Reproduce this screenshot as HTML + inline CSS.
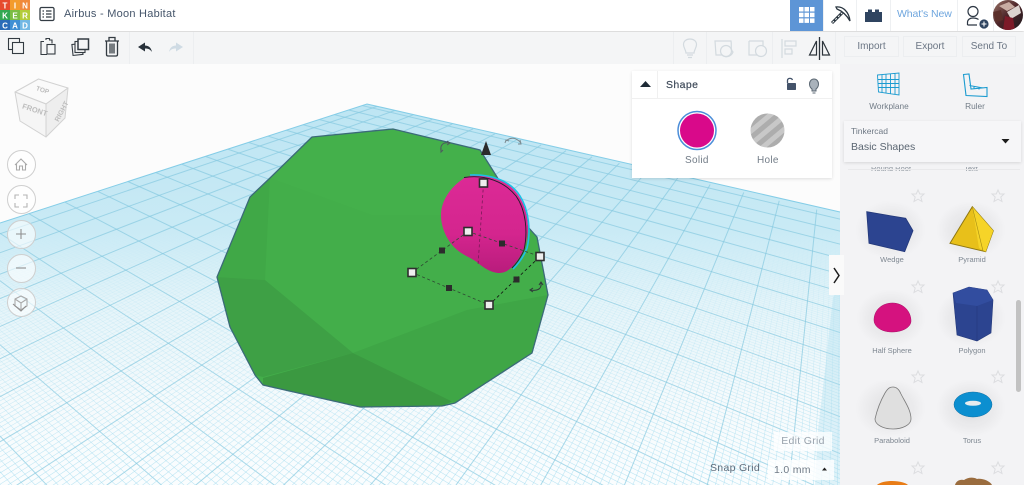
<!DOCTYPE html>
<html><head><meta charset="utf-8">
<style>
html,body{margin:0;padding:0;width:1024px;height:485px;overflow:hidden;background:#fcfcfc;font-family:"Liberation Sans",sans-serif}
.a{position:absolute}
#top{left:0;top:0;width:1024px;height:31px;background:#fff;box-shadow:0 1px 2px rgba(0,0,0,.18)}
#tb{left:0;top:32px;width:1024px;height:32px;background:#f4f5f6}
.t{position:absolute;white-space:nowrap;line-height:1}
.btn{position:absolute;top:36px;height:21px;border:1px solid #eceef0;box-sizing:border-box;text-align:center;font-size:10px;line-height:19px;color:#6b7684;background:#f4f5f6}
.lab{position:absolute;width:80px;text-align:center;font-size:7.5px;color:#7e8791;line-height:1}
.v{position:absolute;left:7px;width:27px;height:27px;border:1px solid #cfcfcf;border-radius:50%;background:rgba(255,255,255,.6)}
</style></head><body>
<svg id="plate" class="a" style="left:0;top:0;overflow:hidden" width="1024" height="485">
<defs>
<clipPath id="pc"><polygon points="0,223 367,104 840,212 840,485 0,485"/></clipPath>
<linearGradient id="bg" gradientUnits="userSpaceOnUse" x1="0" y1="104" x2="0" y2="485"><stop offset="0" stop-color="#bde5f3"/><stop offset=".33" stop-color="#c9eaf5"/><stop offset=".52" stop-color="#e4f4f9"/><stop offset=".78" stop-color="#f5fafc"/><stop offset="1" stop-color="#fafdfe"/></linearGradient>
<linearGradient id="mg" gradientUnits="userSpaceOnUse" x1="0" y1="230" x2="0" y2="470"><stop offset="0" stop-color="#a5dcef" stop-opacity="0"/><stop offset=".4" stop-color="#a5dcef" stop-opacity=".3"/><stop offset="1" stop-color="#a5dcef" stop-opacity=".7"/></linearGradient>
</defs>
<g id="grid" clip-path="url(#pc)"><rect width="1024" height="485" fill="url(#bg)"/></g>
<polygon points="840,290 833,297 825,370 818,430 815,485 840,485" fill="#a8dcee" opacity=".35"/>
<path d="M0 223L367 104L840 212" fill="none" stroke="#84cde7" stroke-width="1"/>
</svg>
<svg class="a" style="left:0;top:0" width="1024" height="485">
<polygon points="312,137 393,129 480,150 497,177 528,227 537,237 548,295 532,353 455,403 442,406 360,407 263,385 255,375 230,327 217,277 250,197 270,178" fill="#43ae4a"/>
<polygon points="217,277 250,197 270,178 265,280" fill="#40a847"/>
<polygon points="217,277 265,280 353,353 263,377 255,375 230,327" fill="#3ea045"/>
<polygon points="263,378 353,353 455,400 442,406 360,407 263,385" fill="#3b9941"/>
<polygon points="353,353 467,310 548,295 532,353 455,403" fill="#3fa646"/>
<polygon points="312,137 393,129 480,150 497,177 470,215 372,215 270,178" fill="#44b04b"/>
<polygon points="312,137 393,129 480,150 497,177 528,227 537,237 548,295 532,353 455,403 442,406 360,407 263,385 255,375 230,327 217,277 250,197 270,178" fill="none" stroke="#3b6a78" stroke-width="1.300"/>
<defs><linearGradient id="pk" x1="0" y1="0" x2="0" y2="1"><stop offset="0" stop-color="#dc2a96"/><stop offset=".6" stop-color="#d4258e"/><stop offset="1" stop-color="#b81c7c"/></linearGradient></defs>
<path d="M466 177C478 173 497 176 510 186C522 196 528 212 528 228C528 243 521 258 512 267C507 272 503 273 498 273C490 272 484 268 478 263C472 258 462 255 455 248C447 240 441 228 441 215C441 200 452 185 466 177Z" fill="url(#pk)"/>
<path d="M470 175C490 174 510 180 520 196C529 210 531 232 527 248C524 256 519 263 513 269" fill="none" stroke="#1cc0e6" stroke-width="1.600"/>
<path d="M464 177.500C485 174 505 182 516 196C526 210 528 232 524 250C521 257 517 263 512 268" fill="none" stroke="#1f1f2a" stroke-width=".9"/>
<g stroke="#2f4a33" stroke-width=".8" stroke-dasharray="3 2.500" fill="none">
<path d="M412 272.500L468 231.500M412 272.500L489 305M468 231.500L540 256.500"/>
<path d="M483.500 184L478 265" stroke="#7a1a58"/>
<path d="M489 305L540 256.500" stroke="#111"/>
</g>
<g fill="#2c2c2c"><rect x="499" y="240.500" width="6" height="6"/><rect x="439" y="247.500" width="6" height="6"/><rect x="446" y="285" width="6" height="6"/><rect x="513.500" y="276.500" width="6" height="6"/></g>
<g fill="#eee" stroke="#2e2e2e" stroke-width="1.600"><rect x="479.500" y="179" width="8" height="8"/><rect x="464" y="227.500" width="8" height="8"/><rect x="408" y="268.500" width="8" height="8"/><rect x="485" y="301" width="8" height="8"/><rect x="536" y="252.500" width="8" height="8"/></g>
<path d="M481 155L491 155L486 141Z" fill="#2b2b2b"/>
<g fill="none" stroke="#4d5a5f" stroke-width="1"><path d="M441 151C440 145 443 142 449 143"/><path d="M441 148L441 152L443 150M447 141L450 143L447 145"/></g>
<g fill="none" stroke="#7c8a90" stroke-width="1"><path d="M506 141C510 137 516 137 521 143"/><path d="M505 143L506 140L509 141M520 140L521 144L518 144"/></g>
<g fill="none" stroke="#2f3a3a" stroke-width="1"><path d="M530 290C536 291 542 290 541 283"/><path d="M533 288L530 290L533 292M539 285L541 282L543 285"/></g>
</svg>

<div id="top" class="a"></div>
<div id="tb" class="a"></div>
<svg class="a" style="left:0;top:0" width="30" height="30">
<rect width="10" height="10" fill="#e64a2e"/><rect x="10" width="10" height="10" fill="#f39c2d"/><rect x="20" width="10" height="10" fill="#f08a3c"/>
<rect y="10" width="10" height="10" fill="#33a852"/><rect x="10" y="10" width="10" height="10" fill="#7cbd42"/><rect x="20" y="10" width="10" height="10" fill="#b4cc3a"/>
<rect y="20" width="10" height="10" fill="#2a6cb8"/><rect x="10" y="20" width="10" height="10" fill="#3f90d4"/><rect x="20" y="20" width="10" height="10" fill="#72b8e4"/>
<g font-family="Liberation Sans" font-weight="700" font-size="8" fill="#fff" text-anchor="middle"><text x="5" y="8.500">T</text><text x="15" y="8.500">I</text><text x="25" y="8.500">N</text><text x="5" y="18.500">K</text><text x="15" y="18.500">E</text><text x="25" y="18.500">R</text><text x="5" y="28.500">C</text><text x="15" y="28.500">A</text><text x="25" y="28.500">D</text></g>
</svg>
<svg class="a" style="left:39px;top:6px" width="16" height="16" fill="none" stroke="#333c44" stroke-width="1.300"><rect x="1" y="1.500" width="14" height="13" rx="1.500"/><path d="M3.500 5H5M7 5H12.500M3.500 8H5M7 8H12.500M3.500 11H5M7 11H12.500"/></svg>
<div class="t" style="left:64px;top:9px;font-size:11px;color:#45556a;letter-spacing:.25px">Airbus - Moon Habitat</div>

<div class="a" style="left:790px;top:0;width:33px;height:31px;background:#5d95d6"></div>
<svg class="a" style="left:790px;top:0" width="234" height="31">
<g fill="#fff"><rect x="9" y="7" width="4.500" height="4.500"/><rect x="14.500" y="7" width="4.500" height="4.500"/><rect x="20" y="7" width="4.500" height="4.500"/><rect x="9" y="12.700" width="4.500" height="4.500"/><rect x="14.500" y="12.700" width="4.500" height="4.500"/><rect x="20" y="12.700" width="4.500" height="4.500"/><rect x="9" y="18.400" width="4.500" height="4.500"/><rect x="14.500" y="18.400" width="4.500" height="4.500"/><rect x="20" y="18.400" width="4.500" height="4.500"/></g>
<path d="M42 23L55 10" stroke="#2a3640" stroke-width="3" fill="none"/><path d="M42.500 22.500L55 10" stroke="#fff" stroke-width="1" stroke-dasharray="2 2" fill="none"/>
<path d="M46 7C53 6 59 12 60 21C56 14 52 11 47 9Z" fill="#fff" stroke="#2a3640" stroke-width="1.300"/>
<path d="M75 12H78V9.500H82V12H85V9.500H89V12H92V22H75Z" fill="#2f4460"/>
<path d="M33.500 0V31M66.500 0V31M100.500 0V31M167.500 0V31M203.500 0V31" stroke="#eef0f2" fill="none"/>
<g fill="none" stroke="#2d3744" stroke-width="1.200"><circle cx="183" cy="11.500" r="5"/><path d="M177.500 25V22.500C177.500 19.500 180 18 183 18C185 18 187 18.500 188.500 19.500M177.500 25H187"/></g>
<circle cx="194" cy="24" r="4.600" fill="#2f4460"/><path d="M191.500 24H196.500M194 21.500V26.500" stroke="#fff" stroke-width="1.100"/>
</svg>
<div class="t" style="left:897px;top:9px;font-size:10.500px;color:#6fa6de;letter-spacing:-.1px">What's New</div>
<svg class="a" style="left:993px;top:0" width="31" height="31">
<defs><clipPath id="av"><circle cx="15" cy="15" r="15"/></clipPath><linearGradient id="ag" x1="0" y1="0" x2="1" y2="1"><stop offset="0" stop-color="#9b7468"/><stop offset=".5" stop-color="#4a2327"/><stop offset="1" stop-color="#1e1b20"/></linearGradient></defs>
<g clip-path="url(#av)"><rect width="30" height="30" fill="url(#ag)"/><path d="M6 6L16 2L22 7L14 11Z" fill="#c9aca2"/><path d="M14 12L26 5L28 13L18 19Z" fill="#dcd3cf"/><path d="M12 16L20 18L22 30H10Z" fill="#7c1a28"/><path d="M0 12L8 10L10 20L3 22Z" fill="#5b2f2a"/></g>
</svg>

<svg class="a" style="left:0;top:32px" width="200" height="32" fill="none" stroke="#333b42" stroke-width="1.100">
<path d="M129.500 0V32M193.500 0V32" stroke="#eceef0" stroke-width="1"/>
<rect x="8.500" y="6.500" width="11" height="11"/><rect x="12.500" y="10.500" width="11" height="11" fill="#f4f5f6"/>
<path d="M44 9.500H41V22.500H47M46 8V6.500H49.500V8H52V11.500"/><rect x="47" y="12.500" width="8" height="9.500" fill="#f4f5f6"/>
<rect x="72.500" y="12" width="10" height="11" transform="rotate(-6 77 18)"/><rect x="75" y="9.500" width="10" height="11" fill="#f4f5f6"/><rect x="78" y="7" width="10.500" height="10.500" fill="#f4f5f6" stroke-width="1.500"/>
<path d="M105 9H119M109 9V5.500H115V9" stroke-width="1.300"/><path d="M106.500 9V22.500Q106.500 24 108 24H116Q117.500 24 117.500 22.500V9M110 11.500V21.500M112 11.500V21.500M114 11.500V21.500" stroke-width="1.300"/>
<path d="M138 15L145 10.500V13.500C148 13.500 151 15 152 20C150 17 148 16.500 145 16.500V19.500Z" fill="#27313a" stroke="none"/>
<path d="M183 15L176 10.500V13.500C173 13.500 170 15 169 20C171 17 173 16.500 176 16.500V19.500Z" fill="#cfdbe4" stroke="none"/>
</svg>
<svg class="a" style="left:670px;top:32px" width="170" height="32" fill="none" stroke="#d3dadf" stroke-width="1.200">
<path d="M3.500 0V32M36.500 0V32M102.500 0V32M165.500 0V32" stroke="#eceef0" stroke-width="1"/>
<path d="M16 21C16 18 13.500 16 13.500 12.500C13.500 9 16.500 7 20 7C23.500 7 26.500 9 26.500 12.500C26.500 16 24 18 24 21ZM17 23H23M18 25.500H22"/>
<path d="M45 9H61C62 14 60 17 63 20C61 25 55 26 52 23H46Z"/><circle cx="56" cy="19" r="5.500"/>
<path d="M79 9H93V14M79 9V23H87"/><circle cx="91" cy="19" r="5.500"/>
<path d="M112 7V26M115 9H126V14H115ZM115 17H122V22H115Z"/>
<path d="M149.500 5V28" stroke="#2c343b" stroke-width="1.300"/><path d="M146.500 23H139.500L146.500 9ZM152.500 9L159.500 23H152.500Z" stroke="#2c343b" stroke-width="1.200"/>
</svg>
<div class="btn" style="left:844px;width:55px">Import</div>
<div class="btn" style="left:903px;width:54px">Export</div>
<div class="btn" style="left:962px;width:54px">Send To</div>

<svg class="a" style="left:0;top:70px" width="80" height="70">
<g stroke="#d2d2d2" stroke-width="1" stroke-linejoin="round"><polygon points="38.500,9 68,18 46,34 15,22" fill="#fafafa"/><polygon points="15,22 46,34 46,67 20,51" fill="#f5f5f5"/><polygon points="46,34 68,18 65,48 46,67" fill="#eeeeee"/></g>
<g font-family="Liberation Sans" font-weight="700" fill="#bdbdbd"><text x="36" y="22" transform="rotate(18 42 20)" font-size="6.500">TOP</text><text x="21" y="41" transform="rotate(18 30 42)" font-size="7.500">FRONT</text><text x="50" y="50" transform="rotate(-62 56 44)" font-size="7">RIGHT</text></g>
</svg>
<div class="v" style="top:150px"></div><div class="v" style="top:185px"></div><div class="v" style="top:220px"></div><div class="v" style="top:254px"></div><div class="v" style="top:288px"></div>
<svg class="a" style="left:0;top:150px" width="42" height="170" fill="none" stroke="#a9a9a9" stroke-width="1.100">
<path d="M15 15L21 9L27 15M16.500 14V20H19.500V16H22.500V20H25.500V14"/>
<path d="M15 49V45H19M23 45H27V49M15 53V57H19M23 57H27V53" stroke="#b4b4b4"/>
<path d="M16 84H26M21 79V89" stroke="#8f8f8f"/>
<path d="M16 118H26" stroke="#8f8f8f"/>
<path d="M15 149L21 146L27 149V156L21 160L15 156ZM15 149L21 153L27 149M21 153V160"/><path d="M13 154L21 161L26 156" stroke="#8f8f8f"/>
</svg>

<div class="a" style="left:632px;top:71px;width:200px;height:107px;background:#fff;box-shadow:0 1px 3px rgba(0,0,0,.12)"></div>
<div class="a" style="left:632px;top:98px;width:200px;height:1px;background:#f0f0f0"></div>
<div class="a" style="left:657px;top:71px;width:1px;height:27px;background:#f0f0f0"></div>
<svg class="a" style="left:632px;top:71px" width="200" height="107">
<path d="M8 17L13.500 11L19 17Z" fill="#1e2a36" transform="translate(0,-1)"/>
<path d="M155.500 12V9.500C155.500 7 159.500 6.500 160.500 9" fill="none" stroke="#44536a" stroke-width="1.300"/><rect x="155" y="12" width="9" height="7" rx=".8" fill="#44536a"/>
<path d="M180 20V18C178 16.500 177.500 15 177.500 13C177.500 10 179.500 8 182 8C184.500 8 186.500 10 186.500 13C186.500 15 186 16.500 184 18V20Z" fill="#a9b2bb" stroke="#5a6672" stroke-width="1"/><path d="M180.500 22H183.500" stroke="#5a6672"/>
<circle cx="65" cy="59.500" r="19" fill="#fff" stroke="#4c8ed9" stroke-width="1.500"/><circle cx="65" cy="59.500" r="17" fill="#d9098a"/>
<defs><pattern id="hp" width="10" height="10" patternUnits="userSpaceOnUse" patternTransform="rotate(-40)"><rect width="10" height="10" fill="#adadad"/><rect width="10" height="5" fill="#c8c8c8"/></pattern></defs>
<circle cx="135.500" cy="59.500" r="17" fill="url(#hp)"/>
</svg>
<div class="t" style="left:666px;top:80px;font-size:10.500px;color:#3f4b5a;letter-spacing:.4px;-webkit-text-stroke:.2px #3f4b5a">Shape</div>
<div class="t" style="left:685px;top:156px;font-size:10px;color:#737d88;letter-spacing:.3px">Solid</div>
<div class="t" style="left:757px;top:156px;font-size:10px;color:#737d88;letter-spacing:.3px">Hole</div>

<div class="a" style="left:840px;top:64px;width:184px;height:421px;background:#f3f3f5"></div>
<svg class="a" style="left:840px;top:64px" width="184" height="60">
<path d="M37.500 11L59 9V31L38.500 28ZM42 11V29M46 10.500V29.500M50.500 10V30M55 9.500V30.500M38 15.500H59M38 19.500H59M38 23.500H59" fill="none" stroke="#1b9bd0" stroke-width=".9"/>
<path d="M123.500 10.500L129 10L131 25L147 23.500V32.500L126 31.500ZM129.500 21.500L143 24M134 22V25M139 23V25.500" fill="none" stroke="#1b9bd0" stroke-width="1.100"/>
</svg>
<div class="lab" style="left:849px;top:102px;font-size:8.300px;color:#727c87">Workplane</div>
<div class="lab" style="left:935px;top:102px;font-size:8.300px;color:#727c87">Ruler</div>

<div class="a" style="left:840px;top:167px;width:184px;height:318px;overflow:hidden">
<div class="lab" style="left:11px;top:-2px;color:#8c949d">Round Roof</div>
<div class="lab" style="left:91px;top:-2px;color:#8c949d">Text</div>
<div class="a" style="left:8px;top:2px;width:172px;height:1px;background:#e9e9eb"></div>
</div>
<div class="a" style="left:844px;top:121px;width:177px;height:41px;background:#f6f6f8;box-shadow:0 1px 3px rgba(0,0,0,.12)"></div>
<div class="t" style="left:851px;top:127px;font-size:8.500px;color:#6e7884">Tinkercad</div>
<div class="t" style="left:851px;top:142px;font-size:10.500px;color:#5b6672">Basic Shapes</div>
<svg class="a" style="left:1000px;top:138px" width="12" height="8"><path d="M1.500 1H9.500L5.500 5.500Z" fill="#1c1c1c"/></svg>

<svg class="a" style="left:840px;top:170px" width="184" height="315">
<defs><radialGradient id="sh"><stop offset="0" stop-color="#000" stop-opacity=".1"/><stop offset="1" stop-color="#000" stop-opacity="0"/></radialGradient></defs>
<g opacity=".9"><ellipse cx="51" cy="60" rx="36" ry="30" fill="url(#sh)"/><ellipse cx="131" cy="60" rx="36" ry="30" fill="url(#sh)"/><ellipse cx="51" cy="148" rx="36" ry="30" fill="url(#sh)"/><ellipse cx="131" cy="148" rx="36" ry="30" fill="url(#sh)"/><ellipse cx="51" cy="238" rx="36" ry="30" fill="url(#sh)"/><ellipse cx="131" cy="238" rx="36" ry="30" fill="url(#sh)"/></g>
<defs><path id="star" d="M0 -6L1.800 -2H6L2.800 1L4 5.500L0 3.200L-4 5.500L-2.800 1L-6 -2H-1.800Z" fill="none" stroke="#dcdde0" stroke-width="1"/></defs>
<use href="#star" x="78" y="26"/><use href="#star" x="158" y="26"/><use href="#star" x="78" y="117"/><use href="#star" x="158" y="117"/><use href="#star" x="78" y="207"/><use href="#star" x="158" y="207"/><use href="#star" x="78" y="298"/><use href="#star" x="158" y="298"/>
<path d="M26.700 41.700L65.700 48.300L73 60.700L64.700 81.700L29 73.300Z" fill="#2c4490" stroke="#24397a" stroke-width=".8"/>
<path d="M132.300 36.700L153.300 60.700L145.700 81.700L110 73.300Z" fill="#e8c01a" stroke="#8e7611" stroke-width="1"/><path d="M132.300 36.700L153.300 60.700L145.700 81.700L139 78Z" fill="#f6d428"/><path d="M132.300 36.700L143 81" stroke="#a68c14" stroke-width=".6"/>
<path d="M34 150C34 140 42 133 52.500 133C63 133 71 141 71 151C71 157 63 162 52 162C42 162 34 157 34 150Z" fill="#d5127f" stroke="#a80f66" stroke-width=".5"/>
<path d="M113 123L129 117L147 120L153 130L151 163L137 171L117 165Z" fill="#2c4490" stroke="#24397a" stroke-width=".6"/>
<path d="M113 123L116 133L137 136L153 130L147 120L129 117Z" fill="#324d9f"/><path d="M137 136V171" stroke="#263c82" stroke-width=".8"/>
<path d="M35 249C37 240 41 230 45 223C48 218 50 217 53 217C56 217 59 219 61 224C65 232 71 240 71 249C71 255 62 259 53 259C44 259 35 255 35 249Z" fill="#dfdfdf" stroke="#7b7b7b" stroke-width=".8"/>
<ellipse cx="133" cy="234.500" rx="19" ry="12.500" fill="#0c8fd0" stroke="#0a6da3" stroke-width=".5"/><ellipse cx="133" cy="233.300" rx="8" ry="2.500" fill="#e7ecee"/>
<path d="M37 315C39 313 45 311 52 311C60 311 66 313 68 315Z" fill="#e87c16"/>
<path d="M115 315C116 311 120 309 124 310C128 307 134 307 137 309C142 308 150 311 152 315Z" fill="#9a6c3e"/>
<rect x="176" y="130" width="5" height="92" rx="2.500" fill="#c2c2c2"/>
</svg>
<div class="lab" style="left:852px;top:256px">Wedge</div>
<div class="lab" style="left:932px;top:256px">Pyramid</div>
<div class="lab" style="left:852px;top:347px">Half Sphere</div>
<div class="lab" style="left:932px;top:347px">Polygon</div>
<div class="lab" style="left:852px;top:437px">Paraboloid</div>
<div class="lab" style="left:932px;top:437px">Torus</div>

<div class="a" style="left:829px;top:255px;width:15px;height:40px;background:#fafafa"></div>
<svg class="a" style="left:829px;top:255px" width="15" height="40"><path d="M5 13L10 20.500L5 28" fill="none" stroke="#1d1d1d" stroke-width="1.500"/></svg>

<div class="a" style="left:774px;top:432px;width:58px;height:19px;background:rgba(255,255,255,.75);text-align:center;font-size:10.500px;line-height:19px;color:#9aa3ad;letter-spacing:.3px">Edit Grid</div>
<div class="t" style="left:710px;top:463px;font-size:10.500px;color:#5f6c7b;letter-spacing:.3px">Snap Grid</div>
<div class="a" style="left:768px;top:460px;width:66px;height:20px;background:rgba(255,255,255,.8);font-size:10.500px;line-height:20px;color:#6f7a86;letter-spacing:.3px;text-indent:6px">1.0 mm</div>
<svg class="a" style="left:821px;top:466px" width="8" height="6"><path d="M1 4.500H6L3.500 1.500Z" fill="#222"/></svg>

<script>
(function(){
var A=[367,104],V2=[843,-51],V1=[-515,-103],g=document.getElementById('grid'),ns='http://www.w3.org/2000/svg';
function line(p,v,cl,w,o){
  var dx=p[0]-v[0],dy=p[1]-v[1],K=12,l=document.createElementNS(ns,'line');
  l.setAttribute('x1',p[0]);l.setAttribute('y1',p[1]);
  l.setAttribute('x2',v[0]+dx*K);l.setAttribute('y2',v[1]+dy*K);
  l.setAttribute('stroke',cl);l.setAttribute('stroke-width',w);l.setAttribute('stroke-opacity',o);
  g.appendChild(l);
}
function on(a,v,n){return [(a[0]-n*v[0])/(1-n),(a[1]-n*v[1])/(1-n)];}
function fam(base,step,vp,other,max){
  var minor=step/10,i;
  for(i=0;base+i*minor<max;i++){
    if(i%10!==0)line(on(A,vp,base+i*minor),other,'url(#mg)',.6,1);
  }
  for(i=0;base+i*step<max;i++){
    line(on(A,vp,base+i*step),other,'#86c9e0',1,.7);
  }
}
fam(.010,.027,V2,V1,.93);
fam(.0113,.0192,V1,V2,.75);
})();
</script>
</body></html>
